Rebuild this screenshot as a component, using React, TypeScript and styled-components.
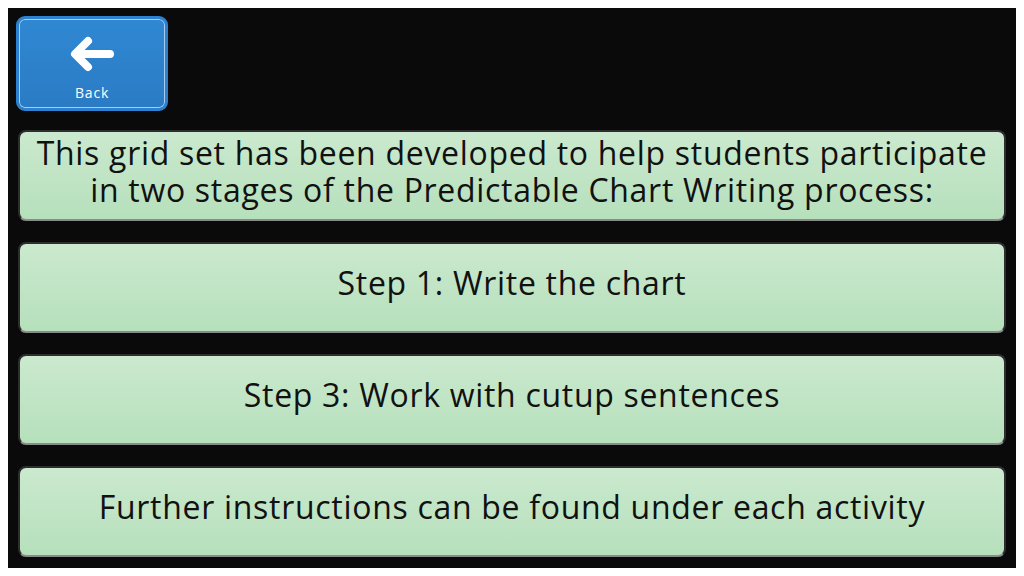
import React from 'react'
import styled, { createGlobalStyle } from 'styled-components'

const GlobalStyle = createGlobalStyle`
  body {
    margin: 8px;
    background: #ffffff;
    font-family: 'Open Sans', 'Noto Sans', sans-serif;
  }
`

const Screen = styled.div`
  width: 1008px;
  height: 560px;
  box-sizing: border-box;
  background: #0a0a0a;
  padding: 8px 10px 11px 8px;
  display: flex;
  flex-direction: column;
`

const TopBar = styled.div`
  display: flex;
  height: 95px;
  margin-bottom: 19px;
`

const BackButton = styled.button`
  width: 152px;
  height: 95px;
  box-sizing: border-box;
  border: 3px solid #2c82d0;
  border-radius: 9px;
  background: linear-gradient(#3088d2, #2a7bc4);
  box-shadow: inset 0 0 0 1px #a9cdf0;
  display: flex;
  flex-direction: column;
  align-items: center;
  justify-content: flex-start;
  gap: 13px;
  padding: 17px 0 0;
  color: #ffffff;
  font-family: 'Open Sans', sans-serif;
  font-size: 14px;
  letter-spacing: 0.8px;
  line-height: 16px;
  cursor: pointer;
`

const Cards = styled.div`
  display: flex;
  flex-direction: column;
  gap: 21px;
  padding-left: 2px;
`

const Card = styled.div`
  height: 91px;
  box-sizing: border-box;
  border-radius: 8px;
  border: 2px solid #2e2e2e;
  border-bottom-color: #8a8a8a;
  background: linear-gradient(#cbe9ce, #b6e0bc);
  display: flex;
  align-items: center;
  justify-content: center;
  text-align: center;
  color: #111111;
  font-size: 32px;
  letter-spacing: 0.7px;
  line-height: 37px;
  padding: 0 8px 10px;
`

const items = [
  'This grid set has been developed to help students participate in two stages of the Predictable Chart Writing process:',
  'Step 1: Write the chart',
  'Step 3: Work with cutup sentences',
  'Further instructions can be found under each activity',
]

export default function App() {
  return (
    <>
      <GlobalStyle />
      <Screen>
        <TopBar>
          <BackButton>
            <svg width="46" height="36" viewBox="0 0 46 36" fill="none">
              <path
                d="M41 18H7M19 5L6 18l13 13"
                stroke="#ffffff"
                strokeWidth="8"
                strokeLinecap="round"
                strokeLinejoin="round"
              />
            </svg>
            <span>Back</span>
          </BackButton>
        </TopBar>
        <Cards>
          {items.map((text) => (
            <Card key={text}>{text}</Card>
          ))}
        </Cards>
      </Screen>
    </>
  )
}
